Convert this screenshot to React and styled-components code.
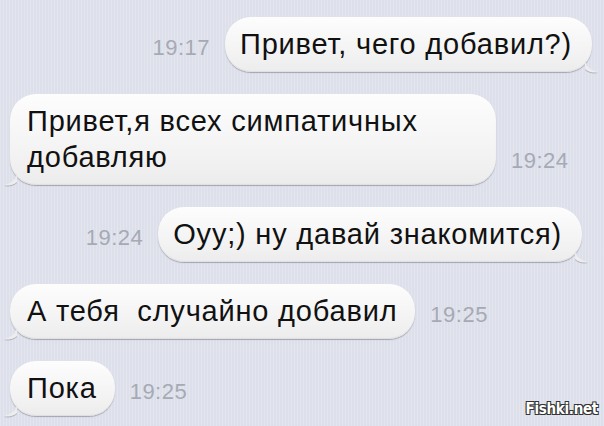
import React from "react";
import styled, { createGlobalStyle } from "styled-components";

const GlobalStyle = createGlobalStyle`
  html, body {
    margin: 0;
    padding: 0;
  }
  body {
    width: 604px;
    height: 426px;
    overflow: hidden;
    font-family: "Liberation Sans", Arial, sans-serif;
  }
`;

const messages = [
  { id: 1, out: true, time: "19:17", text: "Привет, чего добавил?)" },
  {
    id: 2,
    out: false,
    time: "19:24",
    text: "Привет,я всех симпатичных\nдобавляю",
    width: 486,
  },
  { id: 3, out: true, time: "19:24", text: "Оуу;) ну давай знакомится)", shift: 10 },
  { id: 4, out: false, time: "19:25", text: "А тебя  случайно добавил" },
  { id: 5, out: false, time: "19:25", text: "Пока" },
];

const App = () => (
  <Screen>
    <GlobalStyle />
    <Thread>
      {messages.map(m => (
        <Row key={m.id} $out={m.out} $shift={m.shift || 0}>
          <Bubble $out={m.out} $width={m.width}>
            {m.text}
            <Tail $out={m.out} viewBox="0 0 14 14">
              <path
                d="M0 0 C0 6 4 11 13 13 C8 14 3 13 0 10 Z"
                fill="#ededee"
              />
            </Tail>
          </Bubble>
          <Time>{m.time}</Time>
        </Row>
      ))}
    </Thread>
    <Watermark>Fishki.net</Watermark>
  </Screen>
);

const Screen = styled.div`
  position: relative;
  width: 604px;
  height: 426px;
  background-color: #dde0ea;
  background-image: repeating-linear-gradient(
    90deg,
    rgba(255, 255, 255, 0.18) 0px,
    rgba(255, 255, 255, 0.18) 1px,
    rgba(0, 0, 0, 0) 1px,
    rgba(0, 0, 0, 0) 3px
  );
  overflow: hidden;
`;

const Thread = styled.div`
  display: flex;
  flex-direction: column;
  gap: 22px;
  padding: 17px 12px 0 10px;
`;

const Row = styled.div`
  display: flex;
  align-items: flex-end;
  gap: 15px;
  flex-direction: ${p => (p.$out ? "row-reverse" : "row")};
  margin-right: ${p => p.$shift}px;
`;

const Bubble = styled.div`
  position: relative;
  box-sizing: border-box;
  width: ${p => (p.$width ? `${p.$width}px` : "auto")};
  white-space: pre;
  font-size: 29px;
  letter-spacing: 0.8px;
  line-height: 36px;
  color: #111;
  padding: ${p => (p.$out ? "9px 20px 10px 15px" : "9px 18px 10px 17px")};
  border-radius: 26px;
  background: linear-gradient(#fdfdfd, #f2f2f3 70%, #ececed);
  box-shadow: 0 1px 1px rgba(90, 90, 110, 0.45),
    inset 0 -1px 1px rgba(0, 0, 0, 0.06);
`;

const Tail = styled.svg`
  position: absolute;
  bottom: -1px;
  width: 14px;
  height: 14px;
  ${p => (p.$out ? "right: -7px;" : "left: -7px; transform: scaleX(-1);")}
  filter: drop-shadow(0 1px 0 rgba(90, 90, 110, 0.35));
`;

const Time = styled.span`
  font-size: 22px;
  letter-spacing: 0.5px;
  line-height: 22px;
  color: #a6aab5;
  margin-bottom: 13px;
`;

const Watermark = styled.div`
  position: absolute;
  right: 6px;
  bottom: 8px;
  font-family: "Liberation Sans Narrow", "DejaVu Sans Condensed", sans-serif;
  font-weight: bold;
  font-size: 15px;
  letter-spacing: -0.3px;
  color: #fff;
  text-shadow: -1px -1px 0 #333, 1px -1px 0 #333, -1px 1px 0 #333,
    1px 1px 0 #333;
`;

export default App;
